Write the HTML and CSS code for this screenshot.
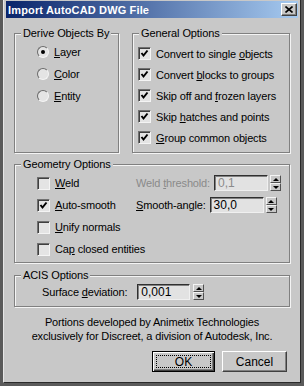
FILE: index.html
```html
<!DOCTYPE html>
<html>
<head>
    <title>Import AutoCAD DWG File</title>
    <link rel="stylesheet" href="styles.css">
</head>
<body>
    <div class="window">
        <div class="titlebar">
            <span class="title">Import AutoCAD DWG File</span>
            <span class="close">
                <svg width="8" height="7" viewBox="0 0 8 7"><path d="M0.5 0.5 L7.5 6.5 M7.5 0.5 L0.5 6.5" stroke="#000" stroke-width="1.6"/></svg>
            </span>
        </div>

        <div class="content">
            <div class="top-row">
                <fieldset class="group derive">
                    <legend>Derive Objects By</legend>
                    <div class="group-body">
                        <div class="row"><span class="radio checked"></span><span><u>L</u>ayer</span></div>
                        <div class="row"><span class="radio"></span><span><u>C</u>olor</span></div>
                        <div class="row"><span class="radio"></span><span><u>E</u>ntity</span></div>
                    </div>
                </fieldset>

                <fieldset class="group general">
                    <legend>General Options</legend>
                    <div class="group-body">
                        <div class="row"><span class="check checked"></span><span>Convert to single <u>o</u>bjects</span></div>
                        <div class="row"><span class="check checked"></span><span>Convert <u>b</u>locks to groups</span></div>
                        <div class="row"><span class="check checked"></span><span>Skip off and <u>f</u>rozen layers</span></div>
                        <div class="row"><span class="check checked"></span><span>Skip <u>h</u>atches and points</span></div>
                        <div class="row"><span class="check checked"></span><span><u>G</u>roup common objects</span></div>
                    </div>
                </fieldset>
            </div>

            <fieldset class="group geometry">
                <legend>Geometry Options</legend>
                <div class="group-body geo-grid">
                    <div class="row"><span class="check"></span><span><u>W</u>eld</span></div>
                    <div class="spin-row disabled">
                        <span class="spin-label">Weld <u>t</u>hreshold:</span>
                        <span class="field">0,1</span>
                        <span class="arrows"><span class="up"></span><span class="down"></span></span>
                    </div>
                    <div class="row"><span class="check checked"></span><span><u>A</u>uto-smooth</span></div>
                    <div class="spin-row">
                        <span class="spin-label"><u>S</u>mooth-angle:</span>
                        <span class="field">30,0</span>
                        <span class="arrows"><span class="up"></span><span class="down"></span></span>
                    </div>
                    <div class="row"><span class="check"></span><span><u>U</u>nify normals</span></div>
                    <div class="row"><span class="check"></span><span>Ca<u>p</u> closed entities</span></div>
                </div>
            </fieldset>

            <fieldset class="group acis">
                <legend>ACIS Options</legend>
                <div class="group-body">
                    <div class="spin-row">
                        <span class="spin-label">Surface <u>d</u>eviation:</span>
                        <span class="field wide">0,001</span>
                        <span class="arrows"><span class="up"></span><span class="down"></span></span>
                    </div>
                </div>
            </fieldset>

            <p class="credits">
                Portions developed by Animetix Technologies<br>
                exclusively for Discreet, a division of Autodesk, Inc.
            </p>

            <div class="buttons">
                <button class="btn default">OK</button>
                <button class="btn cancel">Cancel</button>
            </div>
        </div>
    </div>
</body>
</html>
```

FILE: styles.css
```css
html, body {
    margin: 0;
    background: #5a5a5a;
}

body {
    font-family: "Liberation Sans", Arial, sans-serif;
    font-size: 11px;
    color: #000;
}

.window {
    margin-left: 3px;
    width: 298px;
    height: 383px;
    box-sizing: border-box;
    padding: 1px 1px 0;
    background: #c8c8c8;
    border-left: 1px solid #e6e6e6;
    border-right: 1px solid #2a2a2a;
    border-bottom: 1px solid #2a2a2a;
}

.titlebar {
    height: 17px;
    margin: 0 1px;
    padding: 0 1px 0 2px;
    display: flex;
    align-items: center;
    justify-content: space-between;
    background: linear-gradient(to right, #0a246a, #a6caf0);
}

.title {
    color: #fff;
    font-weight: bold;
    font-size: 11px;
    letter-spacing: 0.15px;
}

.close {
    width: 16px;
    height: 13px;
    box-sizing: border-box;
    display: flex;
    align-items: center;
    justify-content: center;
    background: #c8c8c8;
    border: 1px solid;
    border-color: #fff #404040 #404040 #fff;
    box-shadow: inset -1px -1px #808080;
}

.content {
    padding: 9px 9px 0;
}

.top-row {
    display: flex;
    gap: 13px;
}

.group {
    margin: 0;
    padding: 0;
    min-width: 0;
    border: 1px solid #808080;
    box-shadow: inset 1px 1px #f4f4f4, 1px 1px #f4f4f4;
}

.group legend {
    margin-left: 6px;
    padding: 0 2px;
    line-height: 13px;
    background: #c8c8c8;
    letter-spacing: -0.1px;
}

.derive {
    width: 105px;
    box-sizing: border-box;
}

.derive .group-body {
    padding: 1px 0 0 22px;
}

.general {
    flex: 1;
}

.general .group-body {
    padding: 3px 0 4px 5px;
}

.general .row {
    height: 21px;
}

.row {
    height: 22px;
    display: flex;
    align-items: center;
    letter-spacing: -0.15px;
}

.radio {
    width: 12px;
    height: 12px;
    box-sizing: border-box;
    margin-right: 5px;
    border-radius: 50%;
    border: 1px solid;
    border-color: #6a6a6a #f4f4f4 #f4f4f4 #6a6a6a;
    background: #e4e4e4;
    display: flex;
    align-items: center;
    justify-content: center;
}

.radio.checked::after {
    content: "";
    width: 4px;
    height: 4px;
    border-radius: 50%;
    background: #000;
}

.check {
    width: 13px;
    height: 13px;
    box-sizing: border-box;
    margin-right: 5px;
    border: 1px solid;
    border-color: #707070 #f4f4f4 #f4f4f4 #707070;
    box-shadow: inset 1px 1px #404040;
    background: #e4e4e4;
}

.check.checked {
    background: #e4e4e4 url("data:image/svg+xml;utf8,<svg xmlns='http://www.w3.org/2000/svg' width='11' height='11'><polyline points='2.5,5 4.5,7.5 8.5,2.5' fill='none' stroke='black' stroke-width='2'/></svg>") no-repeat 0 0;
}

.geometry {
    margin-top: 5px;
}

.geo-grid {
    display: grid;
    grid-template-columns: 1fr auto;
    grid-auto-rows: 22px;
    padding: 1px 8px 2px 22px;
}

.geo-grid .row:nth-of-type(n+5) {
    grid-column: 1 / -1;
}

.spin-row {
    display: flex;
    align-items: center;
    letter-spacing: -0.15px;
}

.spin-label {
    margin-right: 4px;
}

.spin-row.disabled .spin-label,
.spin-row.disabled .field {
    color: #8a8a8a;
}

.field {
    width: 54px;
    height: 16px;
    box-sizing: border-box;
    padding: 0 0 0 3px;
    border: 1px solid;
    border-color: #303030 #f0f0f0 #f0f0f0 #303030;
    box-shadow: inset 1px 1px #808080;
    background: #e2e2e2;
    font-size: 12px;
    line-height: 15px;
    letter-spacing: 0;
}

.arrows {
    width: 11px;
    height: 16px;
    margin-left: 2px;
    display: flex;
    flex-direction: column;
}

.arrows span {
    flex: 1;
    display: flex;
    align-items: center;
    justify-content: center;
    box-sizing: border-box;
    background: #c8c8c8;
    border: 1px solid;
    border-color: #f4f4f4 #505050 #505050 #f4f4f4;
}

.arrows .up::after {
    content: "";
    border-left: 3px solid transparent;
    border-right: 3px solid transparent;
    border-bottom: 3px solid #000;
}

.arrows .down::after {
    content: "";
    border-left: 3px solid transparent;
    border-right: 3px solid transparent;
    border-top: 3px solid #000;
}

.acis {
    margin-top: 6px;
}

.acis .group-body {
    padding: 2px 0 6px 27px;
}

.acis .spin-row {
    height: 16px;
}

.acis .spin-label {
    margin-right: 10px;
}

.acis .field {
    width: 53px;
}

.acis .arrows {
    margin-left: 3px;
}

.credits {
    margin: 8px 0 0;
    text-align: center;
    line-height: 14px;
    letter-spacing: -0.15px;
}

.buttons {
    margin-top: 8px;
    padding-right: 3px;
    display: flex;
    justify-content: flex-end;
    gap: 7px;
}

.btn {
    height: 21px;
    padding: 0;
    font-family: "Liberation Sans", Arial, sans-serif;
    font-size: 12px;
    color: #000;
    background: #c8c8c8;
    border: 1px solid;
    border-color: #fff #404040 #404040 #fff;
    box-shadow: inset -1px -1px #808080;
}

.btn.default {
    width: 63px;
    border-color: #000;
    box-shadow: inset 1px 1px #fff, inset -1px -1px #404040, inset -2px -2px #808080;
    outline: 1px dotted #000;
    outline-offset: -5px;
}

.btn.cancel {
    width: 65px;
}
```
